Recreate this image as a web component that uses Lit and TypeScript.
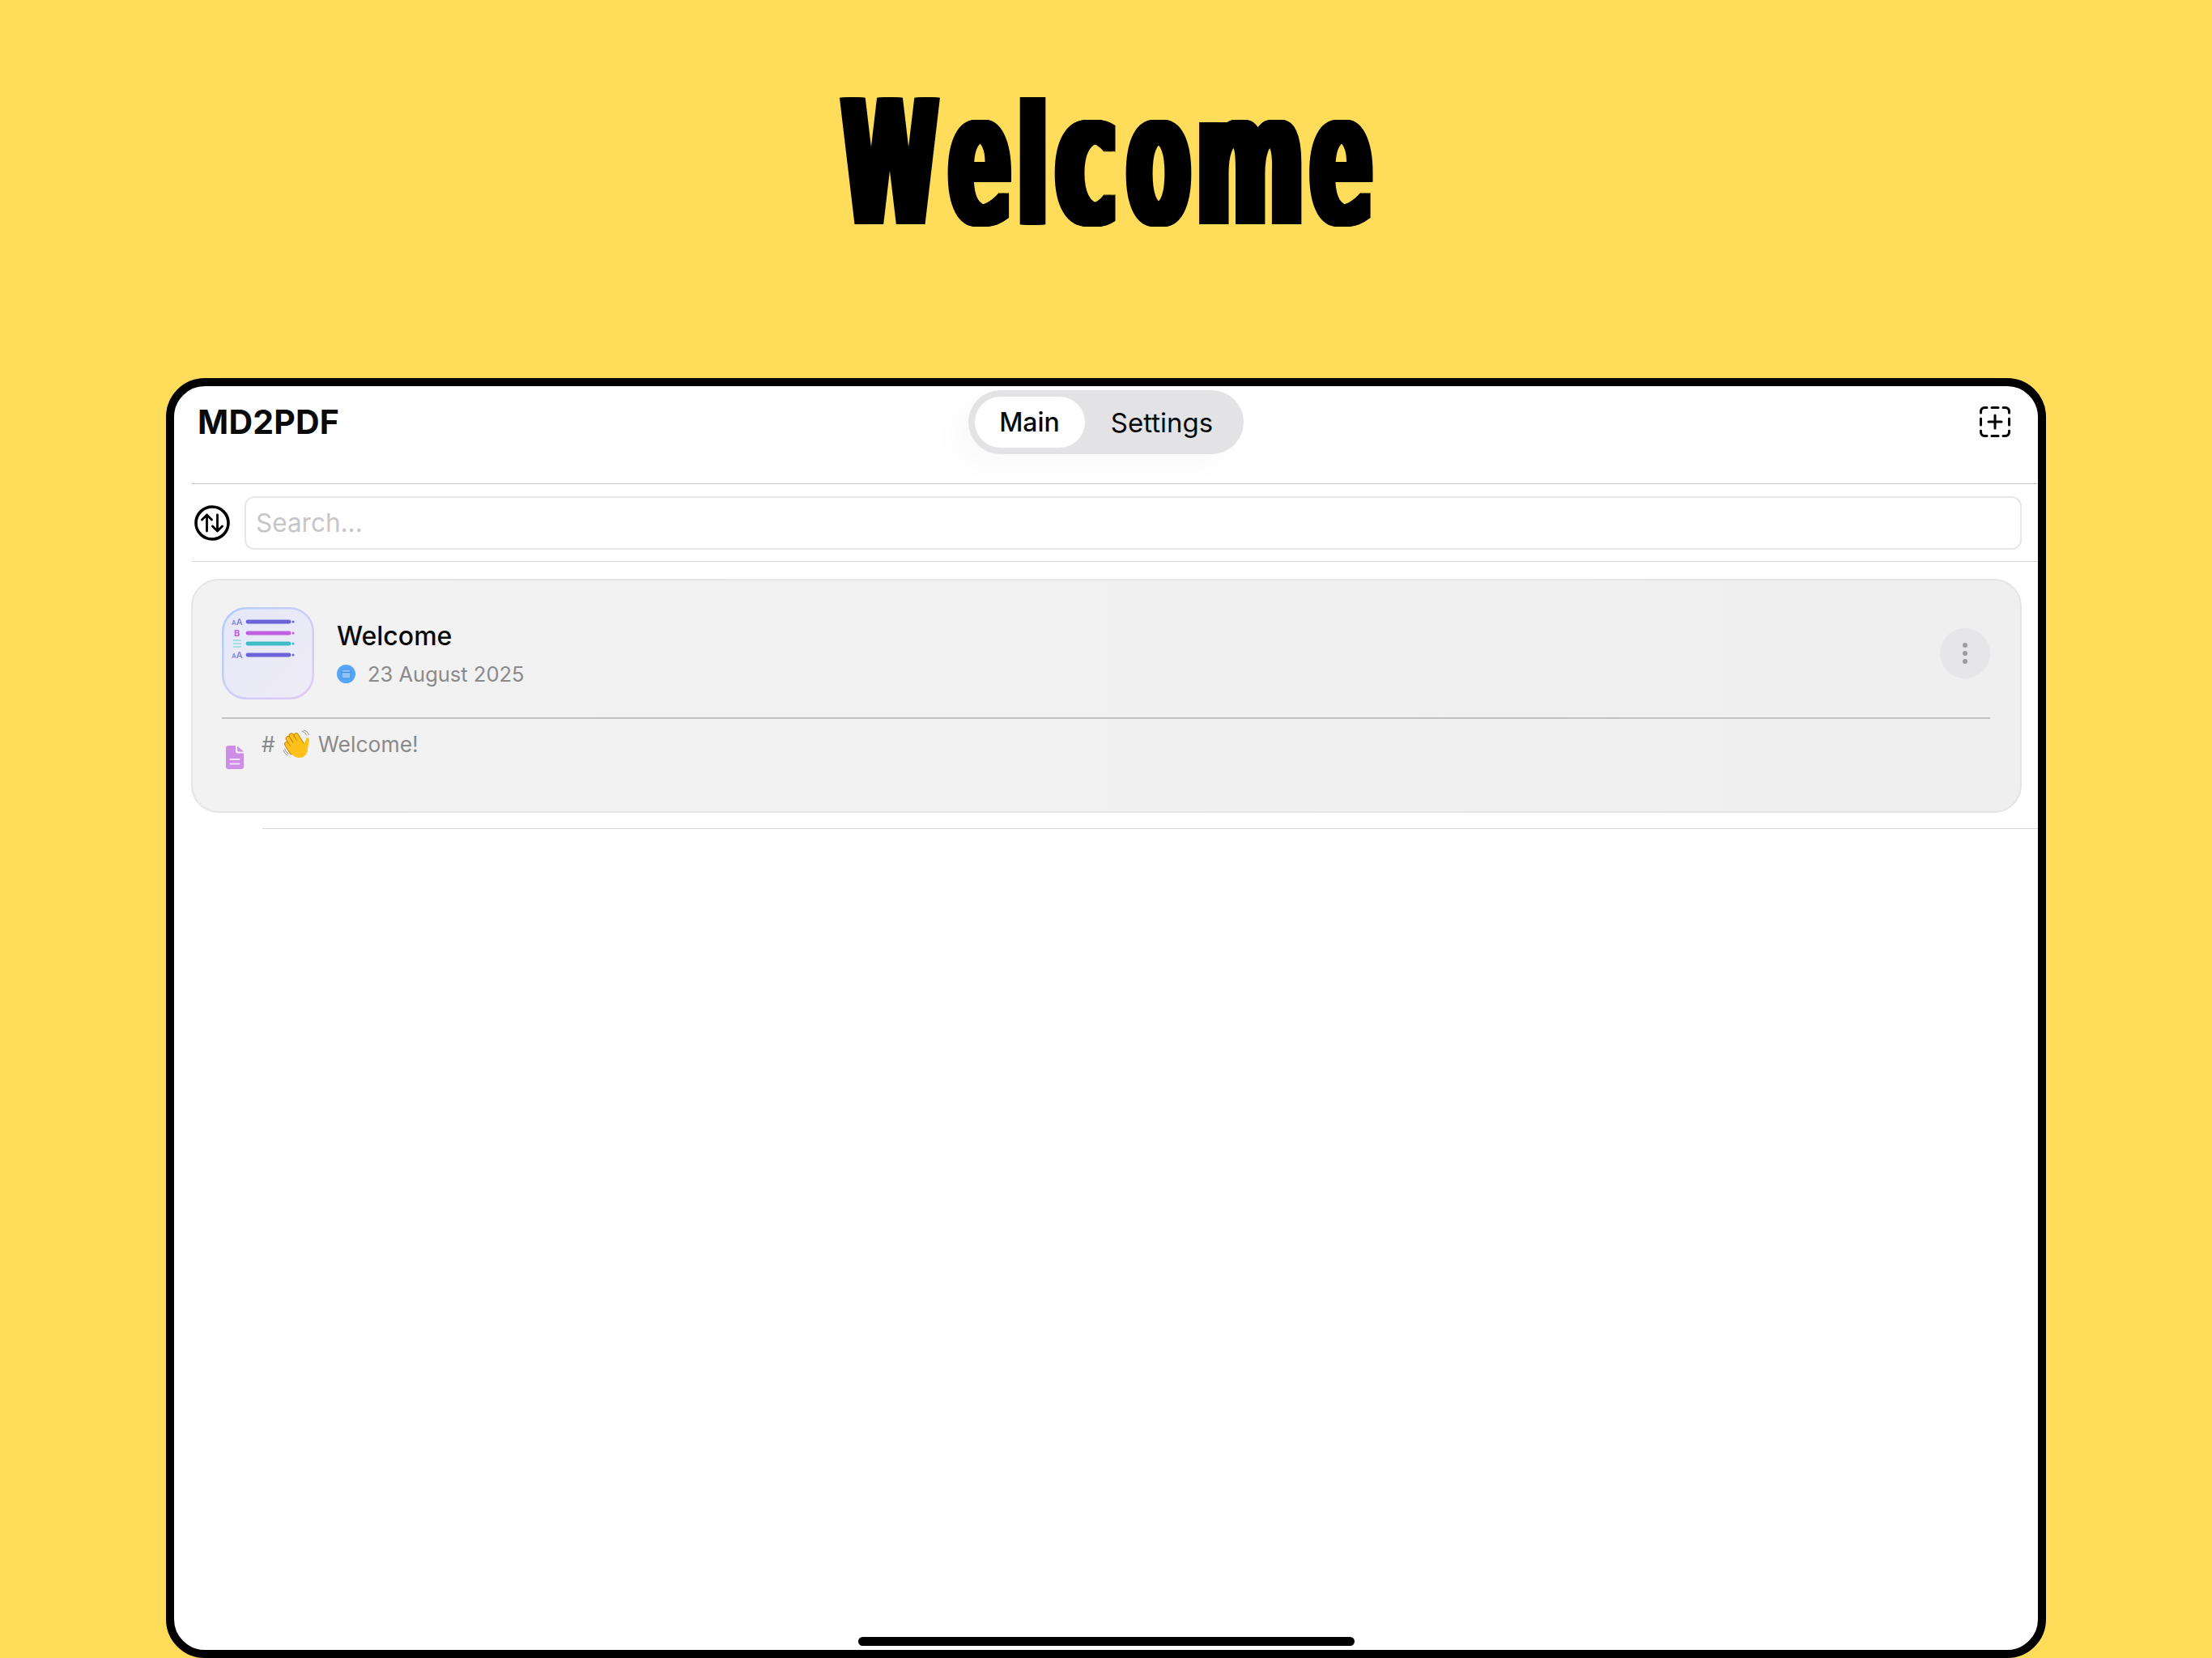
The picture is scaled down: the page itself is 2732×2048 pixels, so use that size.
import { LitElement, html, css } from "lit";
import { customElement } from "lit/decorators.js";

@customElement("app-root")
export class AppRoot extends LitElement {
  static styles = css`
    :host { display: block; width: 2732px; height: 2048px; overflow: hidden; background: #ffdd5a; font-family: Inter, "Liberation Sans", sans-serif; color: #0a0a0a; }
    .page { height: 2048px; display: flex; flex-direction: column; }
    .hero { height: 467px; flex: none; display: flex; justify-content: center; align-items: flex-start; }
    .big { margin: 198px 0 0; display: flex; gap: 10px; align-items: baseline; font-family: "DejaVu Sans", sans-serif; font-weight: 700; color: #000; text-shadow: 12.500px 0 0 #000, -12.500px 0 0 #000, 11px 0 0 #000, -11px 0 0 #000, 9px 0 0 #000, -9px 0 0 #000, 7px 0 0 #000, -7px 0 0 #000, 5px 0 0 #000, -5px 0 0 #000, 3px 0 0 #000, -3px 0 0 #000, 1.500px 0 0 #000, -1.500px 0 0 #000; }
    .big span { display: flex; justify-content: center; white-space: nowrap; height: 0; line-height: 0; }
    .w { width: 124px; font-size: 214px; transform: scaleX(.5); }
    .e { width: 78px; font-size: 230px; transform: scaleX(.49); }
    .e2 { width: 79px; }
    .l { width: 33px; font-size: 207px; transform: scaleX(.515); }
    .c { width: 79px; font-size: 230px; transform: scaleX(.55); }
    .o { width: 80px; font-size: 230px; transform: scaleX(.495); }
    .m { width: 126px; font-size: 230px; transform: scaleX(.555); }
    .frame { flex: 1; margin: 0 205px; box-sizing: border-box; border: 10px solid #000; border-radius: 48px; background: #fff; display: flex; flex-direction: column; overflow: hidden; min-height: 0; }
    .top { height: 120px; flex: none; box-sizing: border-box; padding: 5px 30px 0 29px; display: grid; grid-template-columns: 1fr auto 1fr; align-items: start; }
    .brand { font-size: 41px; font-weight: 700; line-height: 78px; letter-spacing: .2px; }
    .seg { display: flex; align-items: center; height: 79px; width: 340px; box-sizing: border-box; padding: 0 8px; border-radius: 40px; background: #e3e3e6; box-shadow: -20px 16px 34px rgba(0,0,0,.025); font-size: 33px; font-weight: 500; }
    .seg div { height: 63px; display: flex; align-items: center; justify-content: center; border-radius: 32px; }
    .seg .on { width: 136px; background: #fff; font-size: 32px; }
    .seg .off { flex: 1; font-weight: 400; margin-left: 3px; }
    .add { justify-self: end; width: 38px; height: 38px; margin: 20px 4px 0 0; display: block; }
    .rule { height: 1px; flex: none; background: #c8c8ca; margin-left: 22px; }
    .rule.soft { background: #d6d6d8; }
    .search { height: 95px; flex: none; display: flex; align-items: center; gap: 18px; padding: 0 20px 0 25px; box-sizing: border-box; }
    .sort { width: 44px; height: 44px; flex: none; display: block; }
    .field { flex: 1; height: 66px; box-sizing: border-box; border: 2px solid #e8e8ea; border-radius: 12px; padding: 0 12px; display: flex; align-items: center; color: #c6c6c8; font-size: 31.5px; }
    .card { flex: none; margin: 21px 20px 0 21px; box-sizing: border-box; height: 289px; border: 2px solid #e4e4e6; border-radius: 34px; background: linear-gradient(90deg, #f2f2f3, #efeff0); padding: 33px 37px 0 36px; }
    .head { display: flex; align-items: center; height: 114px; }
    .thumb { width: 114px; height: 114px; flex: none; display: block; }
    .meta { flex: 1; margin-left: 28px; display: flex; flex-direction: column; gap: 13px; }
    .name { font-size: 32px; line-height: 38px; font-weight: 500; }
    .date { display: flex; align-items: center; gap: 15px; font-size: 25.5px; line-height: 30px; color: #8a8a8c; }
    .cal { width: 23px; height: 23px; flex: none; display: block; }
    .more { width: 62px; height: 62px; flex: none; border-radius: 50%; background: #e6e6e8; display: flex; flex-direction: column; align-items: center; justify-content: center; gap: 4px; }
    .more i { width: 6px; height: 6px; border-radius: 50%; background: #9c9ca0; }
    .line { height: 1.5px; margin-top: 22px; background: #c2c2c5; }
    .body { display: flex; align-items: flex-start; gap: 22px; padding-left: 5px; }
    .doc { width: 22px; height: 29px; margin-top: 33px; flex: none; display: block; }
    .snippet { margin-top: 13px; display: flex; align-items: center; line-height: 34px; font-size: 26.5px; color: #8a8a8c; }
    .hand { width: 34px; height: 36px; margin: 0 10px 0 9px; flex: none; display: block; }
    .rule.short { margin: 19px 0 0 109px; background: #d6d6d8; }
    .bar { width: 613px; height: 11px; flex: none; margin: auto auto 5px; border-radius: 6px; background: #000; }
  `;

  render() {
    return html`
      <div class="page">
        <div class="hero">
          <h1 class="big" aria-label="Welcome">
            <span class="w">W</span><span class="e">e</span><span class="l">l</span><span class="c">c</span><span class="o">o</span><span class="m">m</span><span class="e e2">e</span>
          </h1>
        </div>
        <div class="frame">
          <div class="top">
            <div class="brand">MD2PDF</div>
            <div class="seg"><div class="on">Main</div><div class="off">Settings</div></div>
            <svg class="add" viewBox="0 0 38 38" fill="none" stroke="#000" stroke-width="3" stroke-linecap="round">
              <path d="M1.5 8V6A4.500 4.500 0 0 1 6 1.500H9M15 1.500H23M29 1.500H32A4.500 4.500 0 0 1 36.500 6V8M36.500 15V23M36.500 30V32A4.500 4.500 0 0 1 32 36.500H29M23 36.500H15M9 36.500H6A4.500 4.500 0 0 1 1.500 32V30M1.500 23V15" />
              <path d="M19 11V27M11 19H27" />
            </svg>
          </div>
          <div class="rule"></div>
          <div class="search">
            <svg class="sort" viewBox="0 0 44 44" fill="none" stroke="#000" stroke-linecap="round" stroke-linejoin="round">
              <circle cx="22" cy="22" r="20" stroke-width="3.6" />
              <path stroke-width="2.8" d="M15.500 32V12M9.500 18L15.500 12L21.500 18M28.500 12V32M22.500 26L28.500 32L34.500 26" />
            </svg>
            <div class="field">Search...</div>
          </div>
          <div class="rule soft"></div>
          <div class="card">
            <div class="head">
              <svg class="thumb" viewBox="0 0 114 114">
                <defs>
                  <linearGradient id="tb" x1="0" y1="0" x2="1" y2="1"><stop offset="0" stop-color="#e4e8f8"/><stop offset="1" stop-color="#efecf6"/></linearGradient>
                  <linearGradient id="te" x1="0" y1="0" x2="1" y2="1"><stop offset="0" stop-color="#aeccfa"/><stop offset=".55" stop-color="#cfcdf8"/><stop offset="1" stop-color="#e0c9f5"/></linearGradient>
                </defs>
                <rect x="1.250" y="1.250" width="111.500" height="111.500" rx="29" fill="url(#tb)" stroke="url(#te)" stroke-width="2.500"/>
                <g font-family="Inter, sans-serif" font-size="11" font-weight="500" fill="#7c78d8"><text x="12" y="22"><tspan font-size="8">A</tspan>A</text><text x="12" y="63"><tspan font-size="8">A</tspan>A</text></g>
                <text x="15" y="36" font-family="Inter, sans-serif" font-size="11" font-weight="700" fill="#c05fe0">B</text>
                <path d="M14 41H24M14 45H24M14 49H24" stroke="#8fdcd8" stroke-width="1.300"/>
                <g stroke-width="4.800" stroke-linecap="round" fill="none">
                  <path d="M32 18H83" stroke="#6d63d8"/><path d="M32 32H83" stroke="#c060e0"/><path d="M32 45H83" stroke="#40bcc8"/><path d="M32 59H83" stroke="#6d63d8"/>
                </g>
                <circle cx="88" cy="18" r="1.600" fill="#6d63d8"/><circle cx="88" cy="32" r="1.600" fill="#c060e0"/><circle cx="88" cy="45" r="1.600" fill="#40bcc8"/><circle cx="88" cy="59" r="1.600" fill="#6d63d8"/>
              </svg>
              <div class="meta">
                <div class="name">Welcome</div>
                <div class="date">
                  <svg class="cal" viewBox="0 0 23 23"><circle cx="11.500" cy="11.500" r="11.500" fill="#55a6f6"/><rect x="6" y="6" width="11" height="11" rx="2" fill="#8fc4f8" stroke="#3f8fe0" stroke-width="1"/><path d="M6 9.500H17" stroke="#3f8fe0" stroke-width="1.400"/></svg>
                  <span>23 August 2025</span>
                </div>
              </div>
              <div class="more"><i></i><i></i><i></i></div>
            </div>
            <div class="line"></div>
            <div class="body">
              <svg class="doc" viewBox="0 0 22 29"><path d="M3 0H12V6.500A3 3 0 0 0 15 9.500H22V26A3 3 0 0 1 19 29H3A3 3 0 0 1 0 26V3A3 3 0 0 1 3 0Z" fill="#cf8ee6"/><path d="M14 0.500L22 7.500H16A2 2 0 0 1 14 5.500Z" fill="#cf8ee6"/><path d="M5.500 17H16.500M5.500 22.500H16.500" stroke="#f1e0f7" stroke-width="2" stroke-linecap="round"/></svg>
              <div class="snippet">
                <span>#</span>
                <svg class="hand" viewBox="0 0 34 36">
                  <g fill="none" stroke="#8f8f8f" stroke-width="1" stroke-linecap="round"><path d="M24 2Q28 3 29.500 7M26.500 0.800Q31 2 32.500 6.500M1 26Q2.500 30 6 32M2.500 24Q3.500 27.500 7 30"/></g>
                  <g transform="rotate(-32 18 20)" fill="#fcc21b" stroke="#c98200" stroke-width="1">
                    <rect x="5.500" y="9" width="5.400" height="17" rx="2.700"/>
                    <rect x="10.500" y="4" width="5.600" height="22" rx="2.800"/>
                    <rect x="15.800" y="3" width="5.600" height="23" rx="2.800"/>
                    <rect x="21" y="6" width="5.400" height="20" rx="2.700"/>
                  </g>
                  <path d="M9 21C7 27 13 35 21 35C27 35 31 30 31 24L33 13C33.500 10 30 9 29 12L26.500 18L16 13Z" fill="#fcc21b"/>
                </svg>
                <span>Welcome!</span>
              </div>
            </div>
          </div>
          <div class="rule short"></div>
          <div class="bar"></div>
        </div>
      </div>
    `;
  }
}
